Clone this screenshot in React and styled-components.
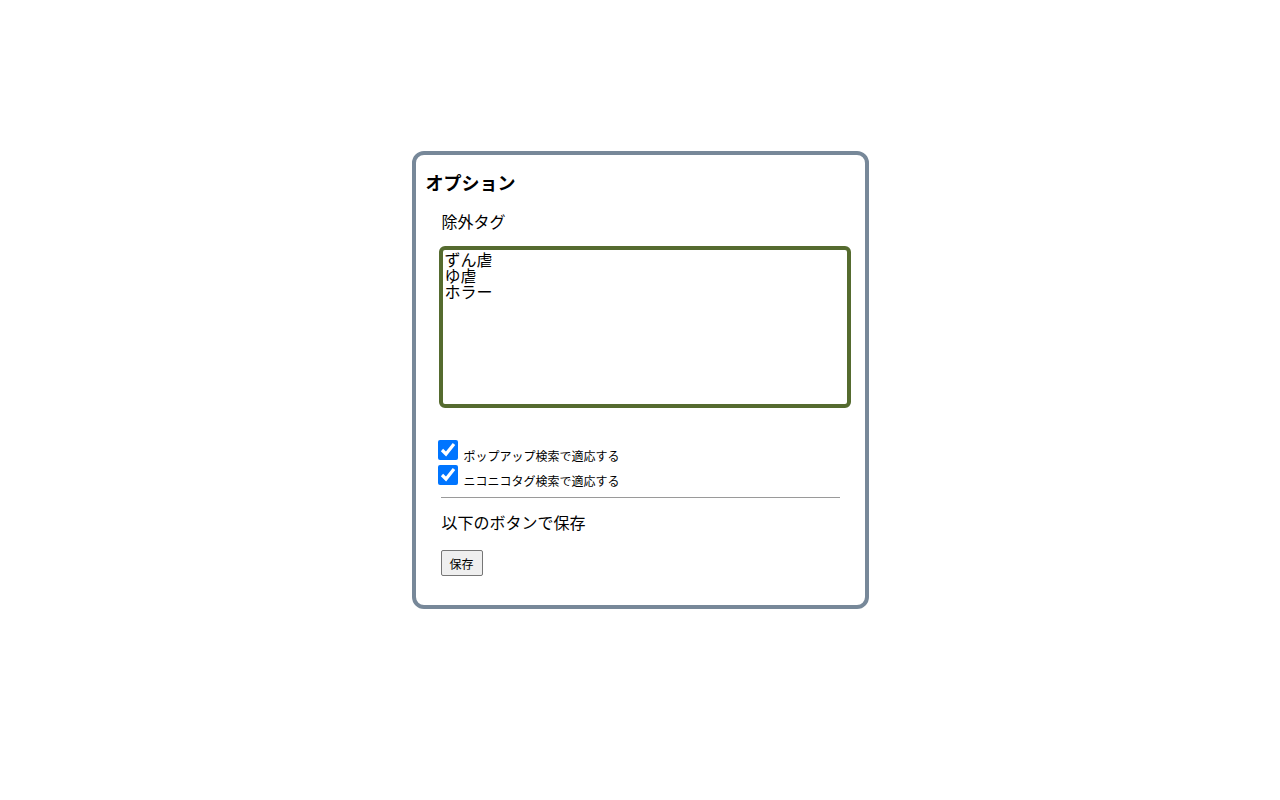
import styled, { createGlobalStyle } from "styled-components";

const GlobalStyle = createGlobalStyle`
  body {
    margin: 0;
    background: #ffffff;
    font-family: "Noto Sans CJK JP", "Noto Sans", sans-serif;
    color: #000;
  }
`;

const Page = styled.div`
  display: flex;
  justify-content: center;
  align-items: flex-start;
  padding-top: 151px;
  min-height: 800px;
  box-sizing: border-box;
`;

const Card = styled.div`
  width: 457px;
  box-sizing: border-box;
  border: 4px solid #778899;
  border-radius: 12px;
  padding: 14px 14px 29px 10px;
  display: flex;
  flex-direction: column;
`;

const Title = styled.h3`
  margin: 0;
  font-size: 18px;
  line-height: 26px;
  font-weight: 700;
`;

const Section = styled.div`
  padding-left: 16px;
  display: flex;
  flex-direction: column;
`;

const Label = styled.p`
  margin: ${(p) => p.$top || 0}px 0 0;
  font-size: 16px;
  line-height: 24px;
`;

const TagBox = styled.textarea`
  margin: 13px 0 0 -3px;
  width: 412px;
  height: 162px;
  box-sizing: border-box;
  border: 4px solid #556b2f;
  border-radius: 6px;
  padding: 1px 2px;
  font-family: "Noto Sans CJK JP", sans-serif;
  font-size: 16px;
  line-height: 16px;
  resize: none;
  outline: none;
`;

const Checks = styled.div`
  margin-top: 32px;
  display: flex;
  flex-direction: column;
  gap: 5px;
  margin-left: -4px;
`;

const CheckRow = styled.label`
  display: flex;
  align-items: flex-end;
  gap: 6px;
  font-size: 12px;
  line-height: 14px;
`;

const CheckText = styled.span`
  margin-bottom: -3px;
`;

const Box = styled.input`
  width: 20px;
  height: 20px;
  margin: 0;
`;

const Rule = styled.hr`
  margin: 12px 0 0 -1px;
  width: 399px;
  border: none;
  border-top: 1px solid #9a9a9a;
`;

const SaveButton = styled.button`
  align-self: flex-start;
  margin: 16px 0 0 -1px;
  height: 26px;
  padding: 0 8px;
  font-family: "Noto Sans CJK JP", sans-serif;
  font-size: 12px;
  background: #efefef;
  border: 1px solid #767676;
  border-radius: 2px;
  color: #000;
`;

export default function App() {
  return (
    <>
      <GlobalStyle />
      <Page>
        <Card>
          <Title>オプション</Title>
          <Section>
            <Label $top={14}>除外タグ</Label>
            <TagBox defaultValue={"ずん虐\nゆ虐\nホラー"} />
            <Checks>
              <CheckRow>
                <Box type="checkbox" defaultChecked />
                <CheckText>ポップアップ検索で適応する</CheckText>
              </CheckRow>
              <CheckRow>
                <Box type="checkbox" defaultChecked />
                <CheckText>ニコニコタグ検索で適応する</CheckText>
              </CheckRow>
            </Checks>
            <Rule />
            <Label $top={12}>以下のボタンで保存</Label>
            <SaveButton>保存</SaveButton>
          </Section>
        </Card>
      </Page>
    </>
  );
}
